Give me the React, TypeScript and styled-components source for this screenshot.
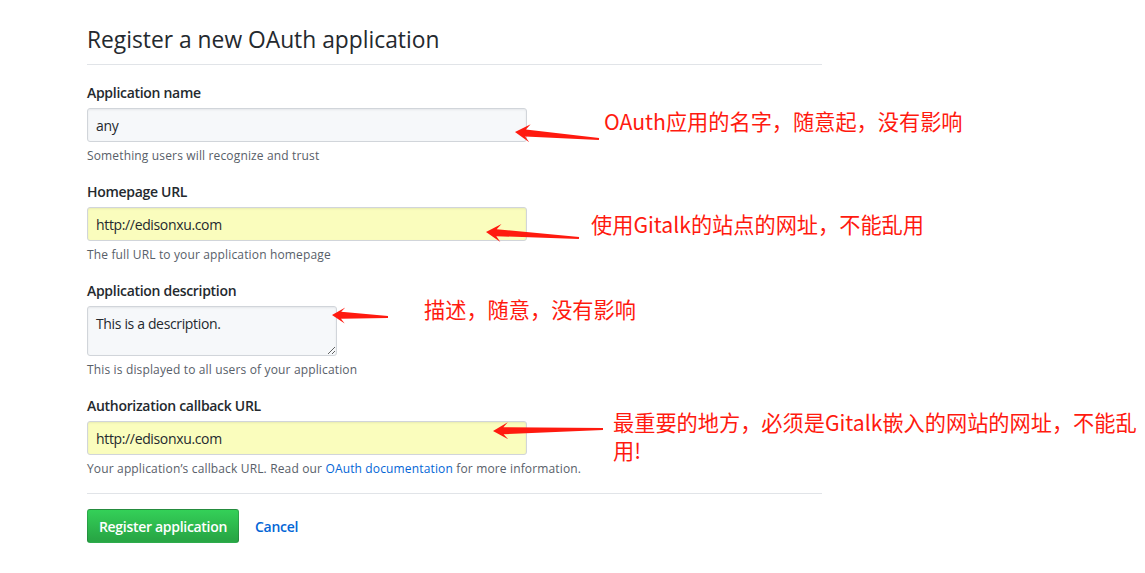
import React from "react";
import styled, { createGlobalStyle } from "styled-components";

const Global = createGlobalStyle`
  html, body { margin: 0; padding: 0; background: #fff; }
  body { font-family: "Open Sans", "Noto Sans", "Liberation Sans", sans-serif; color: #24292e; }
  * { box-sizing: border-box; }
`;

const Page = styled.div`
  position: relative;
  width: 1145px;
  height: 573px;
  overflow: hidden;
  padding-left: 87px;
`;

const Main = styled.div`
  width: 735px;
`;

const Heading = styled.h2`
  margin: 22px 0 0;
  padding-bottom: 7px;
  border-bottom: 1px solid #e1e4e8;
  font-size: 22.8px;
  font-weight: 400;
  line-height: 35px;
  color: #24292e;
`;

const Form = styled.form``;

const Group = styled.div`
  margin: 16px 0 15px;

  &:first-child {
    margin-top: 17px;
  }
`;

const Label = styled.label`
  display: block;
  font-size: 14px;
  font-weight: 600;
  line-height: 21px;
  letter-spacing: -0.3px;
  margin-bottom: 5px;
  color: #24292e;
`;

const Input = styled.input<{ $filled?: boolean }>`
  display: block;
  width: 440px;
  height: 34px;
  padding: 6px 8px;
  font-family: inherit;
  font-size: 14px;
  letter-spacing: -0.35px;
  color: #24292e;
  background: ${(p) => (p.$filled ? "#fafdbd" : "#f6f8fa")};
  border: 1px solid #d1d5da;
  border-radius: 3px;
  box-shadow: inset 0 1px 2px rgba(27, 31, 35, 0.075);
  outline: none;
`;

const TextArea = styled.textarea`
  display: block;
  width: 250px;
  height: 50px;
  padding: 7px 8px;
  font-family: inherit;
  font-size: 14px;
  line-height: 20px;
  letter-spacing: -0.35px;
  color: #24292e;
  background: #f6f8fa;
  border: 1px solid #d1d5da;
  border-radius: 3px;
  box-shadow: inset 0 1px 2px rgba(27, 31, 35, 0.075);
  outline: none;
  resize: both;
`;

const Note = styled.p`
  margin: 5px 0 0;
  font-size: 12px;
  line-height: 18px;
  letter-spacing: 0.15px;
  color: #586069;
`;

const Link = styled.a`
  color: #0366d6;
  text-decoration: none;
`;

const Divider = styled.hr`
  margin: 15px 0 0;
  border: 0;
  border-top: 1px solid #e1e4e8;
  height: 0;
`;

const Actions = styled.div`
  display: flex;
  align-items: center;
  gap: 16px;
  margin-top: 15px;
`;

const Button = styled.button`
  height: 34px;
  width: 152px;
  padding: 0;
  white-space: nowrap;
  font-family: inherit;
  font-size: 14px;
  font-weight: 600;
  letter-spacing: -0.3px;
  color: #fff;
  background-image: linear-gradient(-180deg, #34d058 0%, #28a745 90%);
  border: 1px solid rgba(27, 31, 35, 0.2);
  border-radius: 3px;
  cursor: pointer;
`;

const Cancel = styled.a`
  font-size: 14px;
  font-weight: 600;
  letter-spacing: -0.3px;
  color: #0366d6;
  text-decoration: none;
`;

const Overlay = styled.svg`
  position: absolute;
  left: 0;
  top: 0;
  pointer-events: none;
`;

const Callout = styled.div<{ $x: number; $y: number }>`
  position: absolute;
  left: ${(p) => p.$x}px;
  top: ${(p) => p.$y}px;
  font-family: "Noto Sans CJK SC", "Noto Sans", sans-serif;
  font-size: 21.2px;
  line-height: 28px;
  color: #ff1a0f;
  white-space: nowrap;
`;

type Pt = [number, number];

function arrowPoints(T: Pt, E: Pt, headLen: number, headW: number, shaftW: number, tailW: number) {
  const dx = E[0] - T[0];
  const dy = E[1] - T[1];
  const len = Math.hypot(dx, dy);
  const ux = dx / len;
  const uy = dy / len;
  const nx = -uy;
  const ny = ux;
  const p = (along: number, side: number): string =>
    `${(T[0] + ux * along + nx * side).toFixed(1)},${(T[1] + uy * along + ny * side).toFixed(1)}`;
  return [
    p(0, 0),
    p(headLen, headW / 2),
    p(headLen * 0.7, shaftW / 2),
    p(len, tailW / 2),
    p(len, -tailW / 2),
    p(headLen * 0.7, -shaftW / 2),
    p(headLen, -headW / 2),
  ].join(" ");
}

const arrows: { T: Pt; E: Pt; hl: number; hw: number }[] = [
  { T: [515, 132], E: [599, 139], hl: 15, hw: 18 },
  { T: [486, 232], E: [579, 238], hl: 15, hw: 18 },
  { T: [332, 315], E: [388, 317], hl: 13, hw: 16 },
  { T: [493, 431], E: [603, 429], hl: 15, hw: 17 },
];

export default function App() {
  return (
    <>
      <Global />
      <Page>
        <Main>
          <Heading>Register a new OAuth application</Heading>
          <Form onSubmit={(e) => e.preventDefault()}>
            <Group>
              <Label>Application name</Label>
              <Input defaultValue="any" />
              <Note>Something users will recognize and trust</Note>
            </Group>
            <Group>
              <Label>Homepage URL</Label>
              <Input $filled defaultValue="http://edisonxu.com" />
              <Note>The full URL to your application homepage</Note>
            </Group>
            <Group>
              <Label>Application description</Label>
              <TextArea defaultValue="This is a description." />
              <Note>This is displayed to all users of your application</Note>
            </Group>
            <Group>
              <Label>Authorization callback URL</Label>
              <Input $filled defaultValue="http://edisonxu.com" />
              <Note>
                Your application’s callback URL. Read our <Link href="#">OAuth documentation</Link> for more
                information.
              </Note>
            </Group>
            <Divider />
            <Actions>
              <Button type="submit">Register application</Button>
              <Cancel href="#">Cancel</Cancel>
            </Actions>
          </Form>
        </Main>

        <Overlay width={1145} height={573} viewBox="0 0 1145 573">
          {arrows.map((a, i) => (
            <polygon key={i} points={arrowPoints(a.T, a.E, a.hl, a.hw, 7, 2)} fill="#ff1a0f" />
          ))}
        </Overlay>
        <Callout $x={604} $y={107}>OAuth应用的名字，随意起，没有影响</Callout>
        <Callout $x={591} $y={210}>使用Gitalk的站点的网址，不能乱用</Callout>
        <Callout $x={424} $y={295}>描述，随意，没有影响</Callout>
        <Callout $x={613} $y={408}>
          最重要的地方，必须是Gitalk嵌入的网站的网址，不能乱
          <br />
          用!
        </Callout>
      </Page>
    </>
  );
}
